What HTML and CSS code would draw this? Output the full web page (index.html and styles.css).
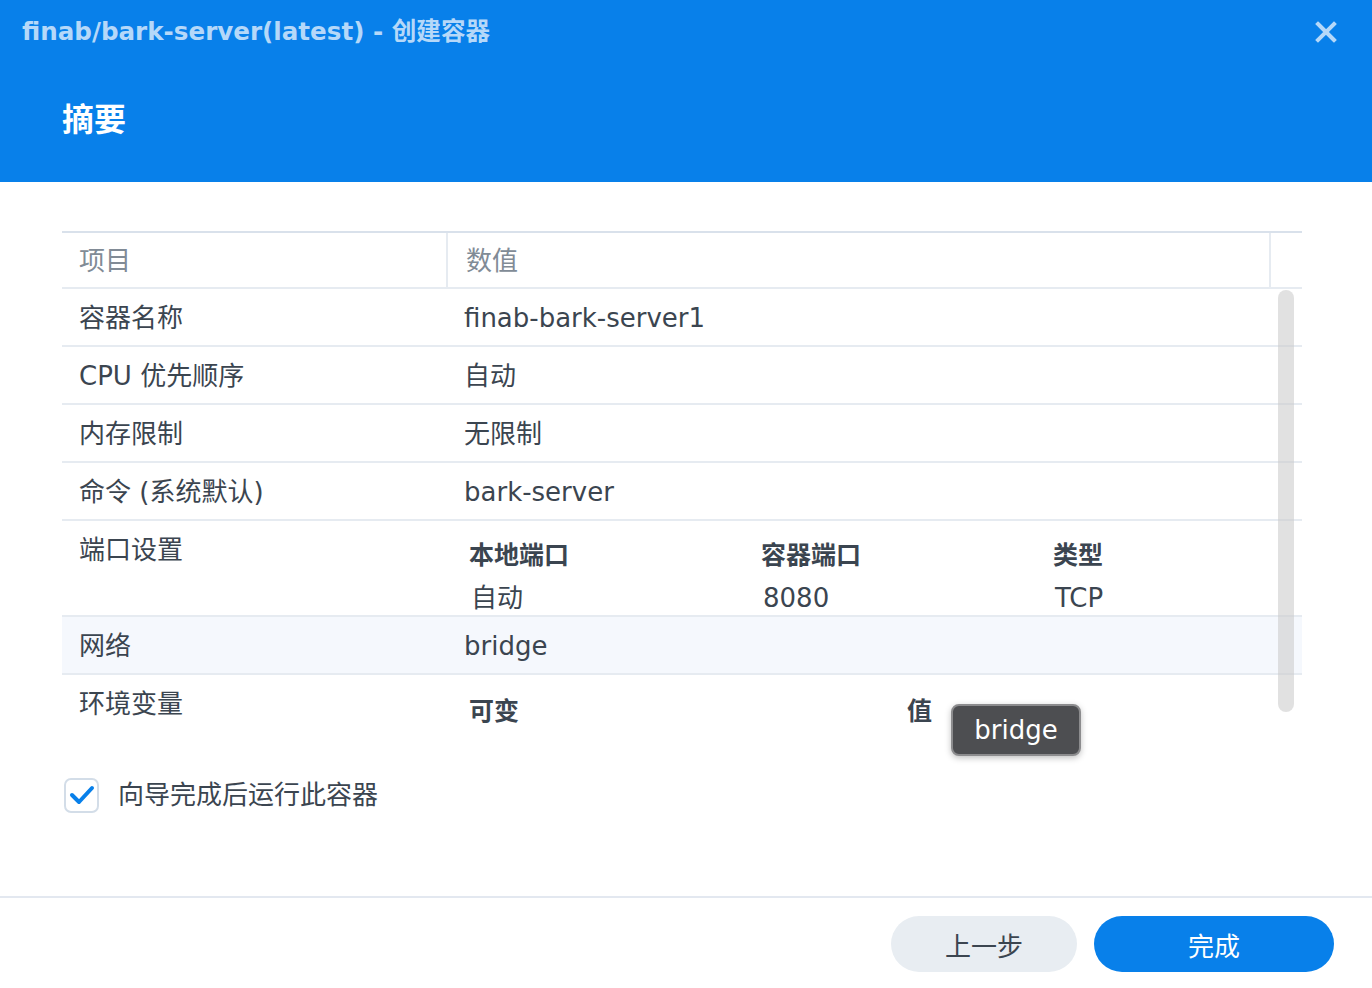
FILE: index.html
```html
<!DOCTYPE html>
<html lang="zh-CN">
<head>
    <meta charset="UTF-8">
    <meta name="viewport" content="width=device-width, initial-scale=1.0">
    <title>创建容器</title>
    <link rel="stylesheet" href="styles.css">
</head>
<body>
    <div class="dialog">
        <div class="head">
            <div class="title-bar">
                <span class="title">finab/bark-server(latest) - 创建容器</span>
                <svg class="close" width="22" height="22" viewBox="0 0 22 22">
                    <path d="M3 3 L19 19 M19 3 L3 19" stroke="currentColor" stroke-width="4" stroke-linecap="square"/>
                </svg>
            </div>
            <h1 class="step-title">摘要</h1>
        </div>

        <div class="content">
            <div class="summary">
                <div class="row thead">
                    <div class="cell key">项目</div>
                    <div class="cell val">数值</div>
                    <div class="cell gutter"></div>
                </div>
                <div class="tbody">
                    <div class="row">
                        <div class="cell key">容器名称</div>
                        <div class="cell val">finab-bark-server1</div>
                    </div>
                    <div class="row">
                        <div class="cell key">CPU 优先顺序</div>
                        <div class="cell val">自动</div>
                    </div>
                    <div class="row">
                        <div class="cell key">内存限制</div>
                        <div class="cell val">无限制</div>
                    </div>
                    <div class="row">
                        <div class="cell key">命令 (系统默认)</div>
                        <div class="cell val">bark-server</div>
                    </div>
                    <div class="row tall">
                        <div class="cell key">端口设置</div>
                        <div class="cell val">
                            <div class="sub">
                                <span class="sub-h">本地端口</span>
                                <span class="sub-h">容器端口</span>
                                <span class="sub-h">类型</span>
                                <span>自动</span>
                                <span>8080</span>
                                <span>TCP</span>
                            </div>
                        </div>
                    </div>
                    <div class="row hl">
                        <div class="cell key">网络</div>
                        <div class="cell val">bridge</div>
                    </div>
                    <div class="row tall">
                        <div class="cell key">环境变量</div>
                        <div class="cell val">
                            <div class="sub env">
                                <span class="sub-h">可变</span>
                                <span class="sub-h">值</span>
                                <span></span>
                                <span>&nbsp;</span>
                                <span>&nbsp;</span>
                            </div>
                        </div>
                    </div>
                    <div class="scroll-thumb"></div>
                </div>
            </div>

            <label class="run-check">
                <span class="box">
                    <svg width="26" height="22" viewBox="0 0 26 22">
                        <path d="M3 11 L10 18 L23 4" fill="none" stroke="#0880ea" stroke-width="4" stroke-linecap="round" stroke-linejoin="round"/>
                    </svg>
                </span>
                向导完成后运行此容器
            </label>
        </div>

        <div class="foot">
            <button class="btn btn-back">上一步</button>
            <button class="btn btn-done">完成</button>
        </div>

        <div class="tip">bridge</div>
    </div>
</body>
</html>
```

FILE: styles.css
```css
body {
    margin: 0;
    font-family: "DejaVu Sans", "Noto Sans CJK SC", sans-serif;
    background: #fff;
    color: #3b4550;
    overflow: hidden;
}
.dialog {
    position: relative;
    height: 988px;
    display: flex;
    flex-direction: column;
}
.head {
    background: #0880ea;
    height: 182px;
    box-sizing: border-box;
}
.title-bar {
    display: flex;
    justify-content: space-between;
    align-items: center;
    padding: 17px 35px 0 22px;
    color: #b5d8f9;
}
.title {
    font-family: "DejaVu Sans", "Noto Sans CJK SC", sans-serif;
    font-weight: bold;
    font-size: 24.6px;
    line-height: 30px;
}
.close {
    color: #b5d8f9;
    margin-top: -1px;
}
.step-title {
    margin: 50px 0 0 62px;
    font-family: "Noto Sans CJK SC", sans-serif;
    color: #fff;
    font-size: 32px;
    line-height: 40px;
    font-weight: bold;
}
.content {
    padding: 49px 70px 0 62px;
}
.summary {
    font-size: 26px;
}
.row {
    display: flex;
    height: 58px;
    box-sizing: border-box;
    border-bottom: 2px solid #e6ebf1;
}
.row.tall {
    height: auto;
    min-height: 96px;
}
.row.hl {
    background: #f5f8fd;
}
.cell {
    box-sizing: border-box;
    display: flex;
    align-items: center;
    line-height: 30px;
    padding-top: 2px;
}
.tall .cell {
    align-items: flex-start;
    padding-top: 14px;
}
.key {
    width: 384px;
    flex-shrink: 0;
    padding-left: 17px;
}
.val {
    flex: 1;
    min-width: 0;
    padding-left: 18px;
}
.thead {
    border-top: 2px solid #d9e1eb;
    color: #818b96;
}
.thead .val {
    border-left: 2px solid #e6ebf1;
}
.gutter {
    width: 33px;
    flex-shrink: 0;
    border-left: 2px solid #e6ebf1;
}
.tbody {
    position: relative;
    height: 452px;
    overflow: hidden;
}
.sub {
    display: grid;
    grid-template-columns: 292px 292px 292px;
    row-gap: 15px;
    padding: 3px 0 0 5px;
}
.sub span:nth-child(n+4) {
    padding-left: 2px;
}
.sub-h {
    font-family: "Noto Sans CJK SC", sans-serif;
    font-weight: bold;
    font-size: 25px;
}
.env {
    grid-template-columns: 438px 292px 146px;
}
.env .sub-h {
    margin-top: 2px;
}
.scroll-thumb {
    position: absolute;
    right: 8px;
    top: 1px;
    width: 16px;
    height: 422px;
    border-radius: 8px;
    background: rgba(200, 200, 200, 0.55);
}
.run-check {
    display: flex;
    align-items: center;
    gap: 19px;
    margin-top: 36px;
    margin-left: 2px;
    font-size: 26px;
    line-height: 36px;
}
.box {
    width: 35px;
    height: 35px;
    box-sizing: border-box;
    border: 2px solid #d3dde8;
    border-radius: 7px;
    display: flex;
    align-items: center;
    justify-content: center;
}
.foot {
    margin-top: auto;
    border-top: 2px solid #e3e8f0;
    height: 92px;
    display: flex;
    justify-content: flex-end;
    align-items: flex-start;
    gap: 17px;
    padding: 18px 38px 0 0;
    box-sizing: border-box;
}
.btn {
    height: 56px;
    border: none;
    border-radius: 28px;
    font-family: "Noto Sans CJK SC", sans-serif;
    font-size: 26px;
    cursor: pointer;
}
.btn-back {
    width: 186px;
    background: #e8edf2;
    color: #3b4550;
}
.btn-done {
    width: 240px;
    background: #0880ea;
    color: #fff;
}
.tip {
    position: absolute;
    left: 951px;
    top: 704px;
    width: 130px;
    height: 52px;
    box-sizing: border-box;
    background: #4d4e51;
    border: 2px solid #8c8c8e;
    border-radius: 8px;
    box-shadow: 0 2px 6px rgba(0, 0, 0, 0.25);
    color: #fff;
    font-size: 26px;
    display: flex;
    align-items: center;
    justify-content: center;
}
```
